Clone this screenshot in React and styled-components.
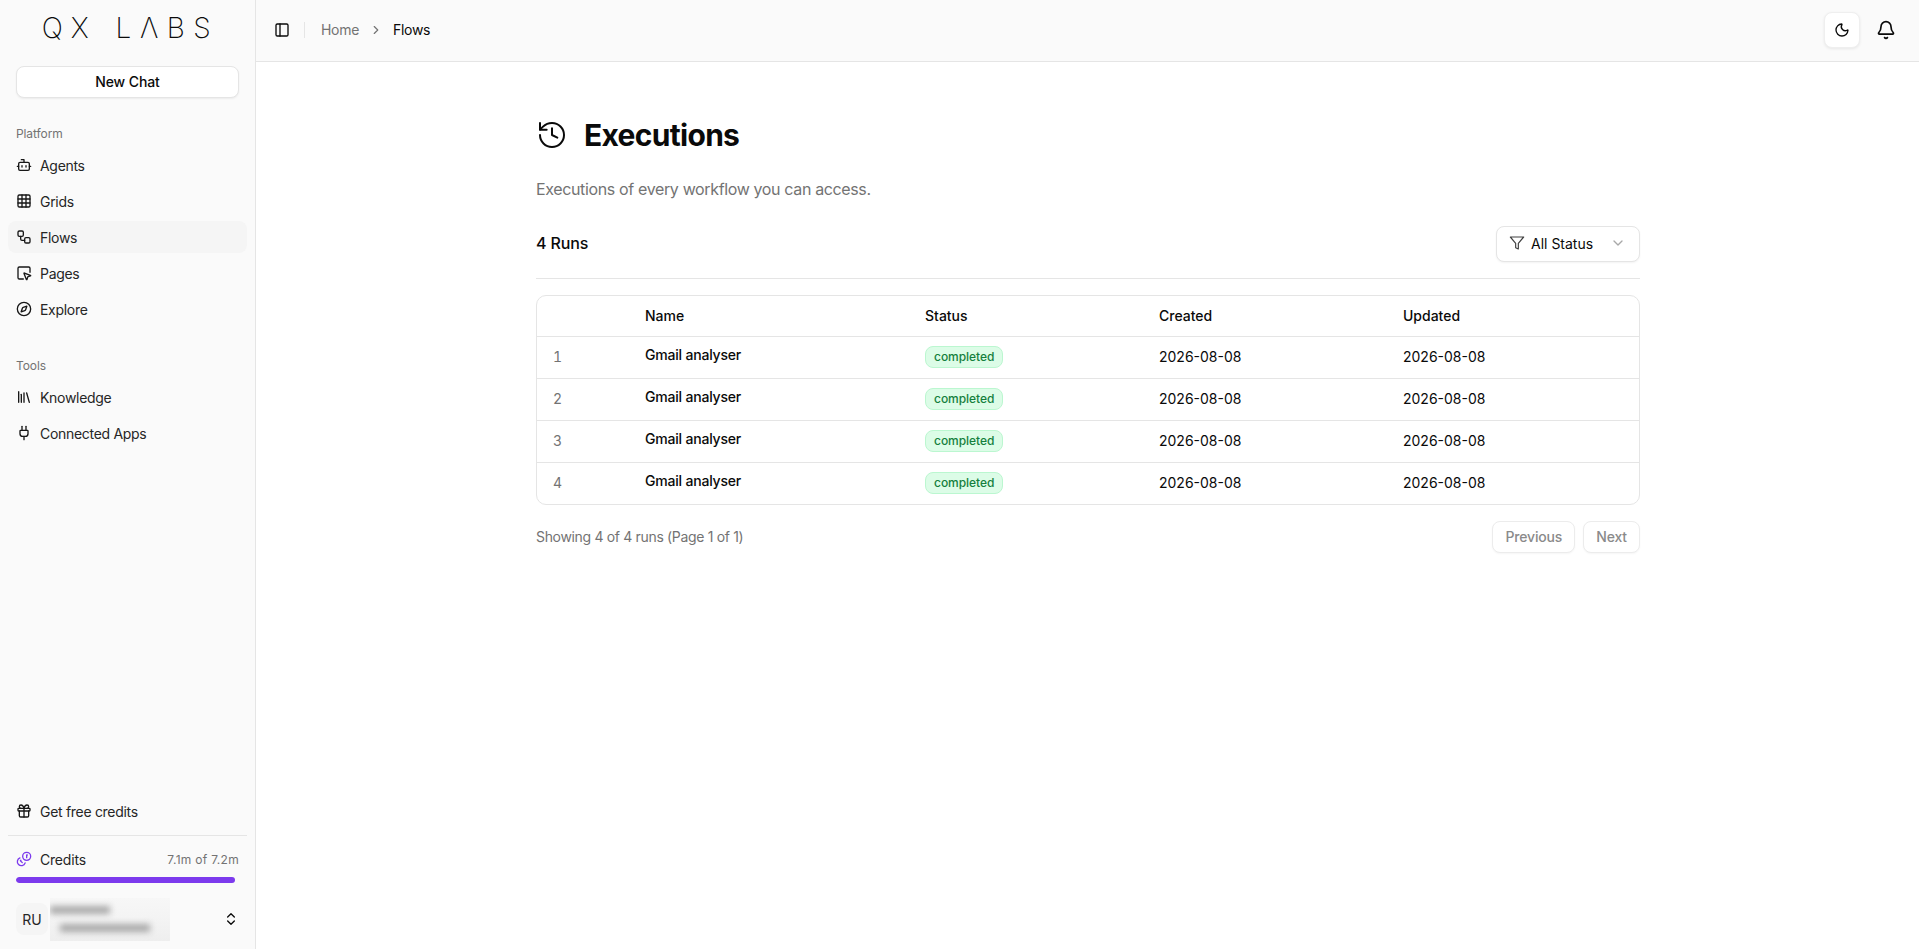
import React from "react";
import styled, { createGlobalStyle } from "styled-components";
import {
  Bell, Bot, ChevronDown, ChevronRight, ChevronsUpDown, Coins, Compass, Gift, Grid3x3,
  History, Library, Moon, PanelLeft, Plug, SquareMousePointer, Workflow,
} from "lucide-react";

const GlobalStyle = createGlobalStyle`
  html, body { margin: 0; padding: 0; height: 100%; background: #fff; }
  body { font-family: Inter, "Liberation Sans", sans-serif; font-size: 14px; color: #0a0a0a; }
  * { box-sizing: border-box; }
`;

const Shell = styled.div`
  display: flex;
  height: 100vh;
  overflow: hidden;
`;

const Sidebar = styled.aside`
  display: flex;
  flex-direction: column;
  flex: 0 0 256px;
  padding: 0 8px 14px;
  background: #fafafa;
  border-right: 1px solid #e5e5e5;
`;

const Logo = styled.div`
  height: 66px;
  padding: 10px 0 0 6px;
  text-align: center;
  font-size: 28px;
  line-height: 36px;
  font-weight: 250;
  letter-spacing: 8.5px;
  word-spacing: 2px;
  color: #0a0a0a;
  white-space: nowrap;
`;

const NewChat = styled.button`
  display: block;
  width: calc(100% - 16px);
  height: 32px;
  margin: 0 8px 19px;
  padding: 0 0 2px;
  background: #fff;
  border: 1px solid #e5e5e5;
  border-radius: 8px;
  box-shadow: 0 1px 2px rgba(0, 0, 0, 0.06);
  font: 500 14px Inter, sans-serif;
  letter-spacing: -0.1px;
  color: #0a0a0a;
`;

const SectionLabel = styled.div`
  height: 32px;
  padding: 1px 8px 0;
  line-height: 32px;
  font-size: 12px;
  letter-spacing: -0.1px;
  color: #737373;
`;

const NavList = styled.nav`
  display: flex;
  flex-direction: column;
  gap: 4px;
  margin-bottom: 24px;
`;

const NavItem = styled.a`
  display: flex;
  align-items: center;
  gap: 8px;
  height: 32px;
  padding: 0 8px;
  border-radius: 8px;
  background: ${(p) => (p.$active ? "#f5f5f5" : "transparent")};
  letter-spacing: -0.3px;
  color: #262626;
  svg { flex: none; color: #171717; }
`;

const SidebarFooter = styled.div`
  margin-top: auto;
`;

const FooterRule = styled.div`
  height: 1px;
  margin: 8px 0 11px;
  background: #e5e5e5;
`;

const CreditsRow = styled.div`
  display: flex;
  align-items: center;
  gap: 8px;
  height: 24px;
  padding: 0 8px;
  letter-spacing: -0.2px;
  color: #262626;
`;

const CreditsIcon = styled(Coins)`
  flex: none;
  color: #7c3aed;
  transform: scaleX(-1);
`;

const CreditsAmount = styled.span`
  margin-left: auto;
  font-size: 12px;
  letter-spacing: 0.3px;
  color: #737373;
`;

const CreditsTrack = styled.div`
  height: 6px;
  margin: 6px 8px 0;
  border-radius: 3px;
  overflow: hidden;
`;

const CreditsFill = styled.div`
  height: 100%;
  border-radius: 3px;
  background: #7c3aed;
`;

const UserRow = styled.div`
  display: flex;
  align-items: center;
  height: 32px;
  margin-top: 20px;
  padding: 0 8px;
`;

const Avatar = styled.div`
  display: flex;
  align-items: center;
  justify-content: center;
  flex: none;
  width: 32px;
  height: 32px;
  border-radius: 8px;
  background: #f5f5f5;
  color: #262626;
`;

const BlurredUser = styled.div`
  position: relative;
  flex: none;
  width: 120px;
  height: 43px;
  margin-left: 2px;
  background: linear-gradient(180deg, #f7f7f7 0%, #f4f4f4 45%, #eeeeee 100%);
  overflow: hidden;
`;

const BlurLine = styled.div`
  position: absolute;
  left: ${(p) => p.$left}px;
  top: ${(p) => p.$top}px;
  width: ${(p) => p.$width}px;
  height: 8px;
  background: #a8a8a8;
  filter: blur(3px);
`;

const UserChevron = styled(ChevronsUpDown)`
  margin-left: auto;
  color: #0a0a0a;
`;

const Main = styled.main`
  flex: 1;
  min-width: 0;
  display: flex;
  flex-direction: column;
`;

const TopBar = styled.header`
  display: flex;
  align-items: center;
  flex: none;
  height: 62px;
  padding: 0 23px 2px 18px;
  background: #fafafa;
  border-bottom: 1px solid #e5e5e5;
`;

const BarDivider = styled.span`
  width: 1px;
  height: 16px;
  margin: 0 16px 0 14px;
  background: #e5e5e5;
`;

const Crumb = styled.span`
  letter-spacing: -0.3px;
  color: ${(p) => (p.$current ? "#0a0a0a" : "#737373")};
`;

const CrumbArrow = styled(ChevronRight)`
  margin: 0 10px;
  color: #737373;
`;

const BarActions = styled.div`
  display: flex;
  align-items: center;
  gap: 16px;
  margin-left: auto;
`;

const ThemeButton = styled.button`
  display: flex;
  align-items: center;
  justify-content: center;
  width: 36px;
  height: 36px;
  padding: 0;
  background: #fff;
  border: 1px solid #efefef;
  border-radius: 8px;
  box-shadow: 0 1px 3px rgba(0, 0, 0, 0.08);
  color: #0a0a0a;
`;

const BellButton = styled.button`
  display: flex;
  padding: 0;
  border: 0;
  background: none;
  color: #0a0a0a;
`;

const Content = styled.div`
  width: 1104px;
  margin: 0 279px 0 280px;
  padding-top: 55px;
`;

const TitleRow = styled.div`
  display: flex;
  align-items: center;
  gap: 16px;
`;

const Title = styled.h1`
  margin: 0;
  font-size: 30px;
  line-height: 36px;
  font-weight: 700;
  letter-spacing: -0.7px;
  color: #0a0a0a;
`;

const Subtitle = styled.p`
  margin: 24px 0 0;
  font-size: 16px;
  line-height: 24px;
  letter-spacing: -0.36px;
  color: #737373;
`;

const Toolbar = styled.div`
  display: flex;
  align-items: center;
  justify-content: space-between;
  margin-top: 25px;
  padding-bottom: 16px;
  border-bottom: 1px solid #e5e5e5;
`;

const RunCount = styled.h2`
  margin: 0 0 2px;
  font-size: 16px;
  font-weight: 500;
  letter-spacing: -0.15px;
  color: #0a0a0a;
`;

const StatusSelect = styled.button`
  display: flex;
  align-items: center;
  gap: 6px;
  width: 144px;
  height: 36px;
  padding: 0 13px 2px 12px;
  background: #fff;
  border: 1px solid #e5e5e5;
  border-radius: 8px;
  box-shadow: 0 1px 2px rgba(0, 0, 0, 0.05);
  font: 400 14px Inter, sans-serif;
  color: #0a0a0a;
`;

const FilterIcon = styled.svg`
  flex: none;
  width: 16px;
  height: 16px;
  fill: none;
  stroke: #404040;
  stroke-width: 1.75;
  stroke-linecap: round;
  stroke-linejoin: round;
`;

const SelectChevron = styled(ChevronDown)`
  margin-left: auto;
  opacity: 0.35;
`;

const TableBox = styled.div`
  margin-top: 16px;
  border: 1px solid #e5e5e5;
  border-radius: 10px;
  overflow: hidden;
`;

const RunsTable = styled.table`
  width: 100%;
  table-layout: fixed;
  border-collapse: separate;
  border-spacing: 0;
`;

const HeadCell = styled.th`
  height: 41px;
  padding: 0 12px 1px;
  text-align: left;
  font-weight: 500;
  color: #0a0a0a;
  border-bottom: 1px solid #e5e5e5;
`;

const Cell = styled.td`
  height: 42px;
  padding: 0 12px 2px;
  color: #0a0a0a;
  border-bottom: 1px solid #e5e5e5;
  tr:last-child & {
    height: 41px;
    border-bottom: 0;
  }
`;

const IndexCell = styled(Cell)`
  padding-left: 16px;
  color: #737373;
  font-variant-numeric: tabular-nums;
`;

const NameCell = styled(Cell)`
  padding-bottom: 6px;
  font-weight: 500;
  letter-spacing: -0.2px;
`;

const Badge = styled.span`
  display: inline-flex;
  align-items: center;
  height: 22px;
  padding: 0 8px;
  vertical-align: middle;
  background: #dcfce7;
  border: 1px solid #bbf7d0;
  border-radius: 8px;
  font-size: 12px;
  font-weight: 500;
  letter-spacing: -0.05px;
  color: #15803d;
`;

const TableFooter = styled.div`
  display: flex;
  align-items: center;
  margin-top: 16px;
`;

const ShowingText = styled.span`
  margin-bottom: 2px;
  letter-spacing: -0.33px;
  color: #737373;
`;

const Pager = styled.div`
  display: flex;
  gap: 8px;
  margin-left: auto;
`;

const PagerButton = styled.button`
  height: 32px;
  padding: 0 12px 1px;
  background: #fff;
  border: 1px solid #ececec;
  border-radius: 8px;
  box-shadow: 0 1px 2px rgba(0, 0, 0, 0.04);
  font: 500 14px Inter, sans-serif;
  letter-spacing: -0.15px;
  color: #8a8a8a;
`;

const platformLinks = [
  { label: "Agents", icon: Bot },
  { label: "Grids", icon: Grid3x3 },
  { label: "Flows", icon: Workflow, active: true },
  { label: "Pages", icon: SquareMousePointer },
  { label: "Explore", icon: Compass },
];

const toolLinks = [
  { label: "Knowledge", icon: Library },
  { label: "Connected Apps", icon: Plug },
];

const runs = [1, 2, 3, 4];
const creditsUsed = 98.2;

function SideLinks({ links }) {
  return (
    <NavList>
      {links.map(({ label, icon: Icon, active }) => (
        <NavItem key={label} $active={active}>
          <Icon size={16} />
          {label}
        </NavItem>
      ))}
    </NavList>
  );
}

export default function App() {
  return (
    <Shell>
      <GlobalStyle />
      <Sidebar>
        <Logo aria-label="QX LABS">QX LΛBS</Logo>
        <NewChat>New Chat</NewChat>
        <SectionLabel>Platform</SectionLabel>
        <SideLinks links={platformLinks} />
        <SectionLabel>Tools</SectionLabel>
        <SideLinks links={toolLinks} />
        <SidebarFooter>
          <NavItem>
            <Gift size={16} />
            Get free credits
          </NavItem>
          <FooterRule />
          <CreditsRow>
            <CreditsIcon size={16} />
            Credits
            <CreditsAmount>7.1m of 7.2m</CreditsAmount>
          </CreditsRow>
          <CreditsTrack>
            <CreditsFill style={{ width: `${creditsUsed}%` }} />
          </CreditsTrack>
          <UserRow>
            <Avatar>RU</Avatar>
            <BlurredUser>
              <BlurLine $left={0} $top={8} $width={60} />
              <BlurLine $left={10} $top={26} $width={90} />
            </BlurredUser>
            <UserChevron size={16} />
          </UserRow>
        </SidebarFooter>
      </Sidebar>
      <Main>
        <TopBar>
          <PanelLeft size={16} />
          <BarDivider />
          <Crumb>Home</Crumb>
          <CrumbArrow size={14} />
          <Crumb $current>Flows</Crumb>
          <BarActions>
            <ThemeButton>
              <Moon size={16} />
            </ThemeButton>
            <BellButton>
              <Bell size={20} />
            </BellButton>
          </BarActions>
        </TopBar>
        <Content>
          <TitleRow>
            <History size={32} strokeWidth={1.5} />
            <Title>Executions</Title>
          </TitleRow>
          <Subtitle>Executions of every workflow you can access.</Subtitle>
          <Toolbar>
            <RunCount>4 Runs</RunCount>
            <StatusSelect>
              <FilterIcon viewBox="0 0 24 24">
                <polygon points="22 3 2 3 10 12.46 10 19 14 21 14 12.46 22 3" />
              </FilterIcon>
              All Status
              <SelectChevron size={16} />
            </StatusSelect>
          </Toolbar>
          <TableBox>
            <RunsTable>
              <colgroup>
                <col style={{ width: 96 }} />
                <col style={{ width: 280 }} />
                <col style={{ width: 234 }} />
                <col style={{ width: 244 }} />
                <col />
              </colgroup>
              <thead>
                <tr>
                  <HeadCell />
                  <HeadCell>Name</HeadCell>
                  <HeadCell>Status</HeadCell>
                  <HeadCell>Created</HeadCell>
                  <HeadCell>Updated</HeadCell>
                </tr>
              </thead>
              <tbody>
                {runs.map((run) => (
                  <tr key={run}>
                    <IndexCell>{run}</IndexCell>
                    <NameCell>Gmail analyser</NameCell>
                    <Cell>
                      <Badge>completed</Badge>
                    </Cell>
                    <Cell>2026-08-08</Cell>
                    <Cell>2026-08-08</Cell>
                  </tr>
                ))}
              </tbody>
            </RunsTable>
          </TableBox>
          <TableFooter>
            <ShowingText>Showing 4 of 4 runs (Page 1 of 1)</ShowingText>
            <Pager>
              <PagerButton>Previous</PagerButton>
              <PagerButton>Next</PagerButton>
            </Pager>
          </TableFooter>
        </Content>
      </Main>
    </Shell>
  );
}
